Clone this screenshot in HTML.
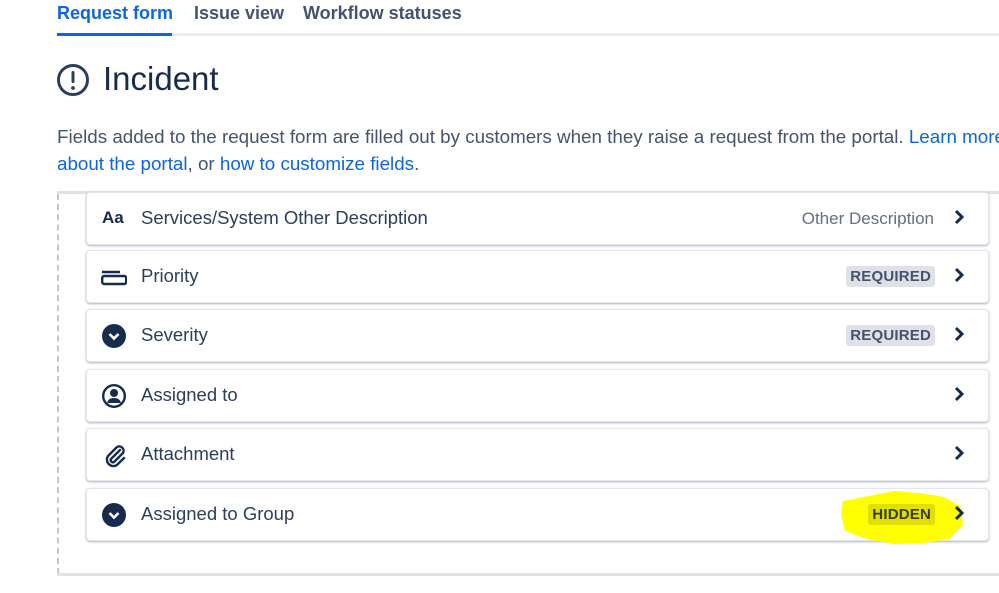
<!DOCTYPE html>
<html><head><style>
body{margin:0;width:999px;height:593px;overflow:hidden;background:#fff;font-family:"Liberation Sans",sans-serif;color:#172b4d;position:relative}
.a{position:absolute}
.tab{position:absolute;top:3px;font-size:18px;font-weight:bold;color:#44546f;white-space:nowrap}
.card{position:absolute;left:86px;width:901px;height:51px;border:1px solid #e4e6ea;border-radius:4px;box-shadow:0 1px 2px rgba(9,30,66,.35);background:#fff}
.lbl{position:absolute;left:54px;top:14px;font-size:18.5px;color:#2c3e5d;white-space:nowrap}
.ic{position:absolute;left:14px;top:13px;width:26px;height:26px}
.chev{position:absolute;left:866px;top:15px}
.badge{position:absolute;right:53px;top:15px;background:#dfe1e6;color:#44546f;font-weight:bold;font-size:15px;padding:2px 4px;border-radius:3px;letter-spacing:.2px}
</style></head><body>
<div class="tab" style="left:57px;color:#0c66e4">Request form</div>
<div class="tab" style="left:194px">Issue view</div>
<div class="tab" style="left:303px">Workflow statuses</div>
<div class="a" style="left:57px;top:33px;width:942px;height:3px;background:#e9ebee"></div>
<div class="a" style="left:57px;top:33px;width:115px;height:3px;background:#0c66e4"></div>
<svg class="a" style="left:56px;top:63px" width="34" height="34" viewBox="0 0 34 34"><circle cx="17" cy="17" r="14.5" fill="none" stroke="#2c3e5d" stroke-width="3"/><rect x="15.5" y="8" width="3" height="12" rx="1.5" fill="#2c3e5d"/><circle cx="17" cy="25" r="1.9" fill="#2c3e5d"/></svg>
<div class="a" style="left:103px;top:60px;font-size:33px;color:#172b4d">Incident</div>
<div class="a" style="left:57px;top:123px;font-size:18.8px;line-height:27px;color:#44546f;white-space:nowrap">Fields added to the request form are filled out by customers when they raise a request from the portal. <span style="color:#0c66e4">Learn more</span><br><span style="color:#0c66e4">about the portal</span>, or <span style="color:#0c66e4">how to customize fields</span>.</div>
<div class="a" style="left:57px;top:191px;width:942px;height:3px;background:#dfe1e6"></div>
<div class="a" style="left:57px;top:194px;height:380px;border-left:2px dashed #c1c7d0"></div>
<div class="a" style="left:57px;top:573px;width:942px;height:3px;background:#dfe1e6"></div>

<div class="card" style="top:192px">
<div class="a" style="left:15px;top:15px;font-weight:bold;font-size:17px;color:#172b4d">Aa</div>
<div class="lbl">Services/System Other Description</div>
<div class="a" style="right:54px;top:16px;font-size:17px;color:#626f86">Other Description</div>
<svg class="chev" width="12" height="18" viewBox="0 0 12 18"><path d="M3 3l6 6-6 6" fill="none" stroke="#172b4d" stroke-width="3"/></svg></div>

<div class="card" style="top:250px">
<svg class="ic" viewBox="0 0 26 26"><path d="M1 8h18" stroke="#172b4d" stroke-width="2.4"/><rect x="1.2" y="12" width="24" height="8" rx="2" fill="none" stroke="#172b4d" stroke-width="2.4"/></svg>
<div class="lbl">Priority</div><div class="badge">REQUIRED</div>
<svg class="chev" width="12" height="18" viewBox="0 0 12 18"><path d="M3 3l6 6-6 6" fill="none" stroke="#172b4d" stroke-width="3"/></svg></div>

<div class="card" style="top:309px">
<svg class="ic" viewBox="0 0 26 26"><circle cx="13" cy="13" r="12" fill="#172b4d"/><path d="M8.5 11l4.5 4.5 4.5-4.5" fill="none" stroke="#fff" stroke-width="2.6"/></svg>
<div class="lbl">Severity</div><div class="badge">REQUIRED</div>
<svg class="chev" width="12" height="18" viewBox="0 0 12 18"><path d="M3 3l6 6-6 6" fill="none" stroke="#172b4d" stroke-width="3"/></svg></div>

<div class="card" style="top:369px">
<svg class="ic" viewBox="0 0 26 26"><circle cx="13" cy="13" r="10.8" fill="none" stroke="#172b4d" stroke-width="2.4"/><circle cx="13" cy="10" r="4" fill="#172b4d"/><path d="M6 20c1-4 4-5 7-5s6 1 7 5z" fill="#172b4d"/></svg>
<div class="lbl">Assigned to</div>
<svg class="chev" width="12" height="18" viewBox="0 0 12 18"><path d="M3 3l6 6-6 6" fill="none" stroke="#172b4d" stroke-width="3"/></svg></div>

<div class="card" style="top:428px">
<svg class="ic" viewBox="0 0 26 26"><path d="M19 8l-9 9a2.2 2.2 0 0 0 3 3l9-9a4.4 4.4 0 0 0-6-6l-9 9a6.5 6.5 0 0 0 9 9l7-7" fill="none" stroke="#172b4d" stroke-width="2.4" stroke-linecap="round"/></svg>
<div class="lbl">Attachment</div>
<svg class="chev" width="12" height="18" viewBox="0 0 12 18"><path d="M3 3l6 6-6 6" fill="none" stroke="#172b4d" stroke-width="3"/></svg></div>

<div class="card" style="top:488px">
<svg class="ic" viewBox="0 0 26 26"><circle cx="13" cy="13" r="12" fill="#172b4d"/><path d="M8.5 11l4.5 4.5 4.5-4.5" fill="none" stroke="#fff" stroke-width="2.6"/></svg>
<div class="lbl">Assigned to Group</div>
<svg class="a" style="left:752px;top:2px" width="126" height="54" viewBox="0 0 126 54"><path d="M4 10 L30 5 L55 0 L80 2 L105 6 L122 16 L124 34 L110 48 L85 52 L55 53 L28 48 L6 40 L2 24Z" fill="#ffff00"/></svg>
<div class="badge" style="background:#e0e000;color:#3a3a10">HIDDEN</div>
<svg class="chev" width="12" height="18" viewBox="0 0 12 18"><path d="M3 3l6 6-6 6" fill="none" stroke="#172b4d" stroke-width="3"/></svg></div>
</body></html>
